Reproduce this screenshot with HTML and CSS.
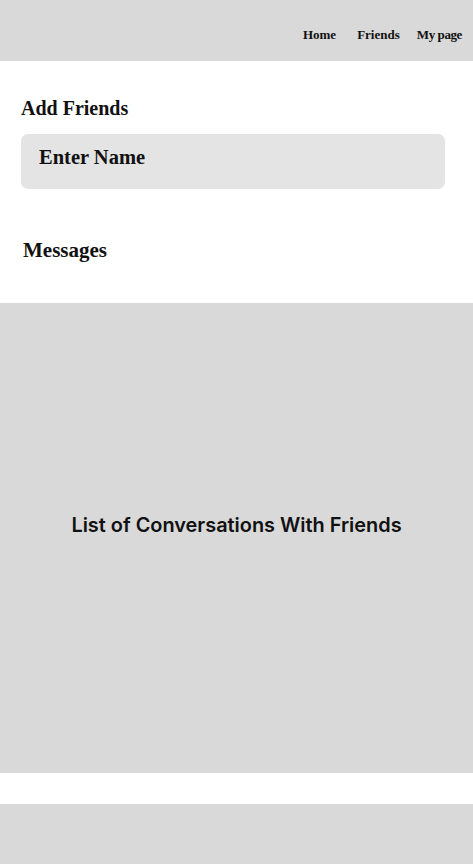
FILE: index.html
```html
<!DOCTYPE html>
<html>
<head>
<meta charset="utf-8">
<link rel="stylesheet" href="styles.css">
</head>
<body>
<header class="topbar">
  <nav class="nav">
    <a class="nav-link nav-home">Home</a>
    <a class="nav-link">Friends</a>
    <a class="nav-link nav-my">My page</a>
  </nav>
</header>
<section class="add">
  <h2 class="title">Add Friends</h2>
  <div class="input">Enter Name</div>
</section>
<section class="messages">
  <h2 class="title msg-title">Messages</h2>
</section>
<section class="list">
  <p class="list-text">List of Conversations With Friends</p>
</section>
<div class="gap"></div>
<footer class="footer"></footer>
</body>
</html>
```
FILE: styles.css
```css
* { box-sizing: border-box; }
html, body { margin: 0; padding: 0; background: #fff; }
body { font-family: "Liberation Serif", serif; color: #111; width: 473px; }
.topbar {
  height: 61px;
  background: #d9d9d9;
  display: flex;
  justify-content: flex-end;
  align-items: flex-start;
}
.nav { display: flex; gap: 17px; padding: 27px 11px 0 0; }
.nav-home { margin-right: 4px; }
.nav-my { letter-spacing: -0.4px; }
.nav-link { font-size: 13px; font-weight: bold; line-height: 16px; }
.add { padding: 35px 28px 0 21px; }
.title { margin: 0; font-size: 20px; font-weight: bold; line-height: 24px; }
.input {
  margin-top: 14px;
  height: 55px;
  background: #e4e4e4;
  border-radius: 7px;
  padding: 11px 0 0 18px;
  font-size: 20.5px;
  font-weight: bold;
  line-height: 24px;
}
.messages { padding: 49px 0 0 23px; height: 114px; }
.msg-title { font-size: 21px; }
.list {
  height: 470px;
  background: #d9d9d9;
  display: flex;
  align-items: center;
  justify-content: center;
}
.list-text {
  margin: 0;
  font-family: Inter, sans-serif;
  font-weight: 600;
  font-size: 19.9px;
  color: #111;
  padding-bottom: 26px;
}
.gap { height: 31px; }
.footer { height: 61px; background: #d9d9d9; }
```
